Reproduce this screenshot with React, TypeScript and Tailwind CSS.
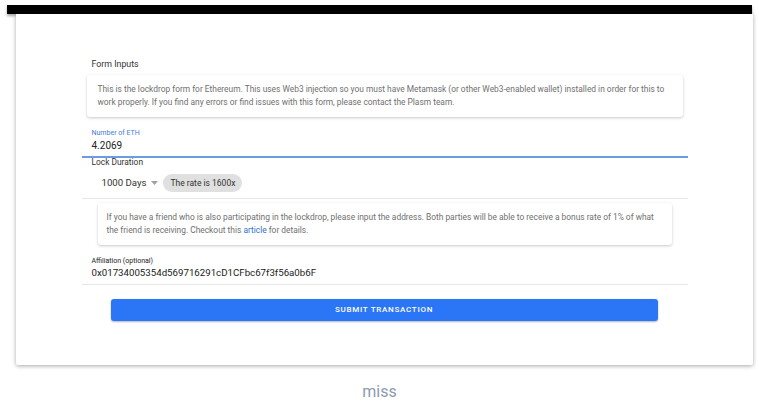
import React from 'react';

function InfoBox({ children, className }: { children: React.ReactNode; className: string }) {
    return (
        <div className={`rounded-[3px] bg-white shadow-[0_1px_3px_rgba(0,0,0,0.22)] text-[8.4px] leading-[13px] text-[#707070] ${className}`}>
            {children}
        </div>
    );
}

export default function App() {
    return (
        <main className="min-h-screen bg-white" style={{ fontFamily: 'Roboto, "Liberation Sans", sans-serif' }}>
            {/* Header strip */}
            <div className="pt-[5px] px-[7px]">
                <div className="h-[9px] bg-black shadow-[0_2px_3px_rgba(0,0,0,0.35)]" />
            </div>

            {/* Card */}
            <div className="ml-[16px] w-[737px] h-[351px] bg-white rounded-b-[2px] shadow-[0_1px_4px_rgba(0,0,0,0.35)] pt-[44px]">
                <div className="mx-auto w-[606px]">
                    <div className="pl-[10px] text-[8.8px] leading-[12px] text-[#333]">Form Inputs</div>

                    <InfoBox className="mt-[5px] mx-[5px] px-[11px] py-[8px]">
                        This is the lockdrop form for Ethereum. This uses Web3 injection so you must have Metamask (or other Web3-enabled wallet) installed in order for this to work properly. If you find any errors or find issues with this form, please contact the Plasm team.
                    </InfoBox>

                    {/* Number of ETH */}
                    <div className="mt-[11px] pl-[10px] pb-[3px]">
                        <div className="text-[7px] leading-[10px] text-[#3b7dde]">Number of ETH</div>
                        <div className="mt-[1px] text-[10px] leading-[14px] text-[#222]">4.2069</div>
                    </div>
                    <div className="h-[2px] bg-[#6c9be0]" />

                    {/* Lock Duration */}
                    <div className="border-b border-[#e6e6e6] pb-[5px]">
                        <div className="pl-[10px] text-[8.4px] leading-[9px] text-[#333]">Lock Duration</div>
                        <div className="mt-[6px] pl-[20px] flex items-center h-[20px]">
                            <span className="text-[9.6px] text-[#333]">1000 Days</span>
                            <svg width="7" height="4" viewBox="0 0 7 4" className="ml-[5px]">
                                <path d="M0 0 L7 0 L3.5 4 Z" fill="#a0a0a0" />
                            </svg>
                            <span className="ml-[5px] h-[18px] px-[7px] rounded-full bg-[#e0e0e0] flex items-center text-[8.5px] text-[#333]">
                                The rate is 1600x
                            </span>
                        </div>
                    </div>

                    <InfoBox className="mt-[4px] ml-[16px] w-[574px] px-[9px] py-[8px]">
                        If you have a friend who is also participating in the lockdrop, please input the address. Both parties will be able to receive a bonus rate of 1% of what the friend is receiving. Checkout this <span className="text-[#2f6fd0]">article</span> for details.
                    </InfoBox>

                    {/* Affiliation */}
                    <div className="mt-[11px] pl-[10px] border-b border-[#e6e6e6] pb-[4px]">
                        <div className="text-[7px] leading-[10px] text-[#222]">Affiliation (optional)</div>
                        <div className="text-[9.7px] leading-[14px] text-[#222]">0x01734005354d569716291cD1CFbc67f3f56a0b6F</div>
                    </div>

                    <button className="mt-[14px] ml-[29px] w-[547px] h-[22px] rounded-[3px] bg-[#2b76f6] shadow-[0_1px_2px_rgba(0,0,0,0.3)] text-white text-[8px] font-medium tracking-[0.09em] uppercase">
                        Submit Transaction
                    </button>
                </div>
            </div>

            <div className="mt-[17px] text-center text-[16px] leading-[20px] text-[#8c9bb0]">miss</div>
        </main>
    );
}
